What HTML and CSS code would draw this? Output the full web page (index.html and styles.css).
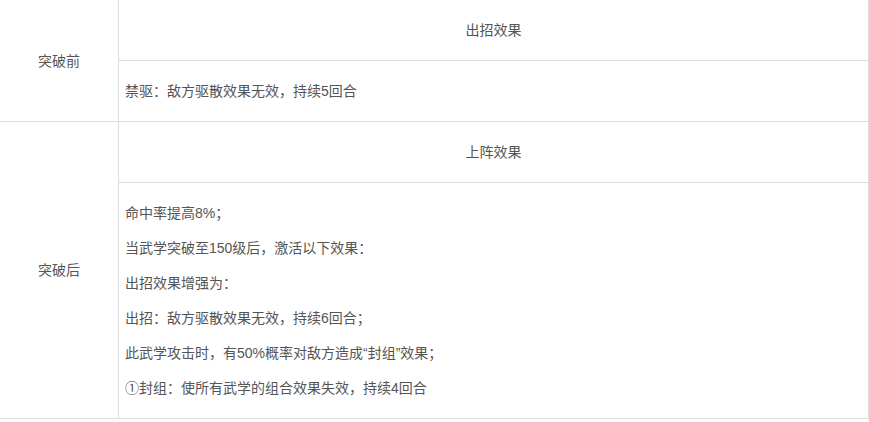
FILE: index.html
```html
<!DOCTYPE html>
<html lang="zh-CN">
<head>
	<meta charset="UTF-8">
	<meta name="viewport" content="width=device-width, initial-scale=1.0">
	<title>武学突破效果</title>
	<link rel="stylesheet" href="styles.css">
</head>
<body>
	<table class="skill-table">
		<colgroup>
			<col class="col-side">
			<col class="col-main">
		</colgroup>
		<tbody>
			<tr>
				<td class="side" rowspan="2"><p>突破前</p></td>
				<td class="head"><p>出招效果</p></td>
			</tr>
			<tr>
				<td><p>禁驱：敌方驱散效果无效，持续5回合</p></td>
			</tr>
			<tr>
				<td class="side" rowspan="2"><p>突破后</p></td>
				<td class="head"><p>上阵效果</p></td>
			</tr>
			<tr>
				<td>
					<p>命中率提高8%；</p>
					<p>当武学突破至150级后，激活以下效果：</p>
					<p>出招效果增强为：</p>
					<p>出招：敌方驱散效果无效，持续6回合；</p>
					<p>此武学攻击时，有50%概率对敌方造成“封组”效果；</p>
					<p>①封组：使所有武学的组合效果失效，持续4回合</p>
				</td>
			</tr>
		</tbody>
	</table>
</body>
</html>
```

FILE: styles.css
```css
body {
    margin: 0;
    padding: 0;
    background-color: #fff;
    font-family: "Liberation Sans", "Noto Sans CJK SC", sans-serif;
    font-size: 14px;
    color: #555;
}
.skill-table {
    width: 869px;
    table-layout: fixed;
    border-collapse: separate;
    border-spacing: 0;
}
.col-side {
    width: 119px;
}
.skill-table td {
    padding: 6px 6px;
    border-right: 1px solid #ddd; /* 只画右边和下边的线 */
    border-bottom: 1px solid #ddd;
    vertical-align: middle;
}
.skill-table p {
    margin: 13px 0;
    line-height: 22px;
}
.side,
.head {
    text-align: center;
}
```
